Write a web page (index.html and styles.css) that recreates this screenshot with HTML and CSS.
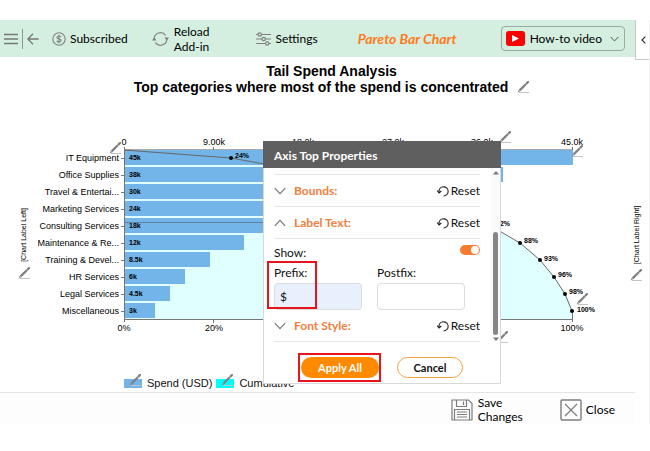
FILE: index.html
```
<!DOCTYPE html>
<html lang="en">
<head>
    <meta charset="UTF-8">
    <meta name="viewport" content="width=device-width, initial-scale=1.0">
    <title>Pareto Bar Chart</title>
    <link rel="stylesheet" href="styles.css">
</head>
<body>
    <svg class="defs" aria-hidden="true">
        <symbol id="pencil" viewBox="0 0 12 12">
            <path d="M2 11.5h10" stroke="#c4c4c4" stroke-width="1"/>
            <path d="M2.6 9.4L8.8 3.2" stroke="#808080" stroke-width="2.2"/>
            <path d="M9.6 2.4L11 1" stroke="#808080" stroke-width="2.2" stroke-linecap="round"/>
            <path d="M0.6 11.4L1.7 8.7L3.3 10.3z" fill="#8a8a8a"/>
        </symbol>
        <symbol id="reset" viewBox="0 0 12 12">
            <path d="M2 7.2V5.6a4.6 4.6 0 1 1 4.6 5.400" fill="none" stroke="#222" stroke-width="1.100"/>
            <path d="M0.2 5.600L2 7.800L4.400 6" fill="none" stroke="#222" stroke-width="1.2"/>
        </symbol>
        <symbol id="chevron" viewBox="0 0 12 8">
            <path d="M0.8 1.2L6 6.6L11.2 1.2" fill="none" stroke="currentColor" stroke-width="1.2"/>
        </symbol>
    </svg>

    <div class="app">
        <div class="pane">
            <header class="topbar">
                <button class="icon-btn menu" aria-label="Menu">
                    <svg width="14" height="12" viewBox="0 0 14 12"><path d="M0 1.5h14M0 6h14M0 10.5h14" stroke="#777" stroke-width="1.5"/></svg>
                </button>
                <button class="icon-btn back" aria-label="Back">
                    <svg width="12" height="12" viewBox="0 0 12 12"><path d="M6 0.8L0.9 6L6 11.2M1 6h10.6" fill="none" stroke="#777" stroke-width="1.3"/></svg>
                </button>
                <button class="nav-item subscribed">
                    <svg width="14" height="14" viewBox="0 0 14 14" fill="none" stroke="#808080"><circle cx="7" cy="7" r="6.2" stroke-width="1.1"/><path d="M9 5.2C8.7 4.2 7.9 4 7 4c-1.200 0-2 .5-2 1.400C5 7.600 9.100 6.300 9.100 8.600 9.100 9.500 8.200 10 7 10S5 9.600 4.800 8.600M7 2.800v8.400" stroke-width="1.1"/></svg>
                    Subscribed
                </button>
                <button class="nav-item reload">
                    <svg width="17" height="16" viewBox="0 0 17 16" fill="none" stroke="#808080" stroke-width="1.2"><path d="M2.200 8A6.300 6.300 0 0 1 13.600 4.300M14.800 8A6.300 6.300 0 0 1 3.400 11.700"/><path d="M12.400 6.500H17L14.800 9.500zM0 9.500H4.600L2.200 6.500z" fill="#808080" stroke="none"/></svg>
                    <span>Reload<br>Add-in</span>
                </button>
                <button class="nav-item settings">
                    <svg width="15" height="14" viewBox="0 0 15 14" fill="none" stroke="#808080" stroke-width="1.2"><path d="M0 2.500h2M5.500 2.500H15M0 7h6M9.500 7H15M0 11.500h9.500M13 11.500h2"/><circle cx="3.700" cy="2.500" r="1.700"/><circle cx="7.700" cy="7" r="1.700"/><circle cx="11.200" cy="11.500" r="1.700"/></svg>
                    Settings
                </button>
                <h1 class="chart-name">Pareto Bar Chart</h1>
                <button class="video-btn">
                    <svg width="19" height="15" viewBox="0 0 19 15"><rect width="19" height="15" rx="3" fill="#f00"/><path d="M6 4L13 7.500L6 11z" fill="#fff"/></svg>
                    <span>How-to video</span>
                    <svg class="caret" width="9" height="6"><use href="#chevron"/></svg>
                </button>
            </header>

            <main class="chart">
                <div class="titles">
                    <div>Tail Spend Analysis</div>
                    <div>Top categories where most of the spend is concentrated<button class="icon-btn edit-title" aria-label="Edit title"><svg width="12" height="12"><use href="#pencil"/></svg></button></div>
                </div>

                <svg class="plot" viewBox="0 94 635 280">
                    <!-- cumulative area -->
                    <path class="area" d="M124 150L231 158L325 175L397 192L451 209L491 226L520 243L540 260L554 277L565 294L572 311V319H124z"/>

                    <g class="bars">
                        <rect x="124" y="150" width="449" height="15"/>
                        <rect x="124" y="167" width="379" height="15"/>
                        <rect x="124" y="184" width="299" height="15"/>
                        <rect x="124" y="201" width="239" height="15"/>
                        <rect x="124" y="218" width="180" height="15"/>
                        <rect x="124" y="235" width="120" height="15"/>
                        <rect x="124" y="252" width="86" height="15"/>
                        <rect x="124" y="269" width="61" height="15"/>
                        <rect x="124" y="286" width="46" height="15"/>
                        <rect x="124" y="303" width="31" height="15"/>
                    </g>

                    <!-- axes, ticks and the 80% line -->
                    <path class="axis-light" d="M124 149.500H573"/>
                    <path class="axis" d="M124.500 147V322M124 319.500H572M213.500 147v3M572.500 147v3M213.500 319v4M572.500 313v9"/>
                    <path class="axis" d="M121 158.500h3M121 175.500h3M121 192.500h3M121 209.500h3M121 226.500h3M121 243.500h3M121 260.500h3M121 277.500h3M121 294.500h3M121 311.500h3"/>
                    <path class="target" d="M124 222.500H484"/>

                    <path class="curve" d="M124 150L231 158L325 175L397 192L451 209L491 226L520 243L540 260L554 277L565 294L572 311"/>
                    <g class="dots">
                        <circle cx="231" cy="158" r="2"/>
                        <circle cx="520" cy="243" r="2"/>
                        <circle cx="540" cy="260" r="2"/>
                        <circle cx="554" cy="277" r="2"/>
                        <circle cx="565" cy="294" r="2"/>
                        <circle cx="572" cy="311" r="2"/>
                    </g>

                    <g class="category">
                        <text x="119" y="161">IT Equipment</text>
                        <text x="119" y="178">Office Supplies</text>
                        <text x="119" y="195">Travel &amp; Entertai...</text>
                        <text x="119" y="212">Marketing Services</text>
                        <text x="119" y="229">Consulting Services</text>
                        <text x="119" y="246">Maintenance &amp; Re...</text>
                        <text x="119" y="263">Training &amp; Devel...</text>
                        <text x="119" y="280">HR Services</text>
                        <text x="119" y="297">Legal Services</text>
                        <text x="119" y="314">Miscellaneous</text>
                    </g>

                    <g class="value">
                        <text x="129" y="160">45k</text>
                        <text x="129" y="177">38k</text>
                        <text x="129" y="194">30k</text>
                        <text x="129" y="211">24k</text>
                        <text x="129" y="228">18k</text>
                        <text x="129" y="245">12k</text>
                        <text x="129" y="262">8.5k</text>
                        <text x="129" y="279">6k</text>
                        <text x="129" y="296">4.5k</text>
                        <text x="129" y="313">3k</text>
                        <text x="235" y="158">24%</text>
                        <text x="496" y="226">82%</text>
                        <text x="524" y="243">88%</text>
                        <text x="544" y="261">93%</text>
                        <text x="558" y="277">96%</text>
                        <text x="569" y="294">98%</text>
                        <text x="577" y="312">100%</text>
                    </g>

                    <g class="scale">
                        <text x="124" y="145">0</text>
                        <text x="214" y="145">9.00k</text>
                        <text x="303" y="145">18.0k</text>
                        <text x="393" y="145">27.0k</text>
                        <text x="482" y="145">36.0k</text>
                        <text x="572" y="145">45.0k</text>
                        <text x="124" y="331">0%</text>
                        <text x="214" y="331">20%</text>
                        <text x="572" y="331">100%</text>
                    </g>

                    <g class="side">
                        <text transform="translate(26 235) rotate(-90)">[Chart Label Left]</text>
                        <text transform="translate(639 235) rotate(-90)">[Chart Label Right]</text>
                    </g>

                    <g class="pencils">
                        <use href="#pencil" x="109" y="142" width="12" height="12"/>
                        <use href="#pencil" x="18" y="267" width="12" height="12"/>
                        <use href="#pencil" x="499" y="131" width="12" height="12"/>
                        <use href="#pencil" x="571" y="145" width="12" height="12"/>
                        <use href="#pencil" x="630" y="269" width="12" height="12"/>
                        <use href="#pencil" x="576" y="293" width="12" height="12"/>
                        <use href="#pencil" x="496" y="331" width="12" height="12"/>
                    </g>
                </svg>

                <div class="legend">
                    <span class="key spend"><svg width="12" height="12"><use href="#pencil"/></svg></span>Spend (USD)
                    <span class="key cumulative"><svg width="12" height="12"><use href="#pencil"/></svg></span>Cumulative
                </div>
            </main>

            <footer class="footer">
                <button class="nav-item save">
                    <svg width="22" height="22" viewBox="0 0 22 22" fill="none" stroke="#7d7d7d" stroke-width="1.200"><path d="M1 1h16.500L21 4.500V21H1z"/><path d="M5.500 1v6.500h10V1M12.500 2.500v3.500M3.500 21V10.500h15V21M6 13h10M6 15.500h10M6 18h10"/></svg>
                    <span>Save<br>Changes</span>
                </button>
                <button class="nav-item close">
                    <svg width="22" height="22" viewBox="0 0 22 22" fill="none" stroke="#7d7d7d"><rect x="1" y="1" width="20" height="20" rx="1" stroke-width="1.400"/><path d="M5 5l12 12M17 5L5 17" stroke-width="1.200"/></svg>
                    Close
                </button>
            </footer>
        </div>

        <aside class="rail">
            <button class="icon-btn collapse" aria-label="Expand panel">
                <svg width="5" height="8" viewBox="0 0 5 8"><path d="M4.400 0.600L1 4L4.400 7.400" fill="none" stroke="#333" stroke-width="1.200"/></svg>
            </button>
        </aside>
    </div>

    <section class="dialog" role="dialog" aria-label="Axis Top Properties">
        <h2>Axis Top Properties</h2>
        <div class="dialog-body">
            <div class="fields">
                <div class="section-row">
                    <svg width="12" height="8"><use href="#chevron"/></svg>
                    <h3>Bounds:</h3>
                    <button class="reset"><svg width="12" height="12"><use href="#reset"/></svg>Reset</button>
                </div>
                <div class="section-row">
                    <svg class="up" width="12" height="8"><use href="#chevron"/></svg>
                    <h3>Label Text:</h3>
                    <button class="reset"><svg width="12" height="12"><use href="#reset"/></svg>Reset</button>
                </div>
                <div class="show-row">
                    <label for="show">Show:</label>
                    <input type="checkbox" id="show" class="toggle" checked>
                </div>
                <div class="text-row">
                    <div class="field">
                        <label for="prefix">Prefix:</label>
                        <input type="text" id="prefix" class="filled" value="$">
                    </div>
                    <div class="field">
                        <label for="postfix">Postfix:</label>
                        <input type="text" id="postfix">
                    </div>
                </div>
                <div class="section-row last">
                    <svg width="12" height="8"><use href="#chevron"/></svg>
                    <h3>Font Style:</h3>
                    <button class="reset"><svg width="12" height="12"><use href="#reset"/></svg>Reset</button>
                </div>
            </div>
            <div class="scrollbar">
                <svg width="8" height="5" viewBox="0 0 8 5"><path d="M1 4.500L4 1L7 4.500z" fill="#777"/></svg>
                <span class="thumb"></span>
                <svg width="8" height="5" viewBox="0 0 8 5"><path d="M1 0.500L4 4L7 0.500z" fill="#777"/></svg>
            </div>
        </div>
        <div class="actions">
            <button class="apply">Apply All</button>
            <button class="cancel">Cancel</button>
        </div>
        <div class="callout callout-prefix"></div>
        <div class="callout callout-apply"></div>
    </section>
</body>
</html>
```
FILE: styles.css
```
* {
    box-sizing: border-box;
}
body {
    margin: 0;
    padding-top: 20px;
    background: #fff;
    color: #111;
    font-family: Lato, "Open Sans", sans-serif;
    font-size: 12px;
}
button {
    padding: 0;
    border: none;
    background: none;
    color: inherit;
    font: inherit;
    cursor: pointer;
}
svg {
    display: block;
    flex: none;
}
.defs {
    position: absolute;
    width: 0;
    height: 0;
}
.app {
    display: flex;
}
.pane {
    flex: 1;
    min-width: 0;
}

/* top bar */
.topbar {
    display: flex;
    align-items: center;
    height: 37px;
    padding: 0 10px 0 4px;
    background: #d4efdf;
}
.menu {
    padding-right: 4px;
}
.back {
    padding: 4px 0 4px 4px;
    border-left: 1px solid #8a9a91;
}
.nav-item {
    display: flex;
    align-items: center;
    gap: 5px;
    color: #000;
    text-align: left;
}
.topbar .nav-item {
    line-height: 15px;
}
.topbar .subscribed {
    gap: 4px;
    margin-left: 13px;
}
.reload {
    margin-left: 24px;
}
.settings {
    margin-left: 46px;
}
.chart-name {
    margin: 0 0 0 40px;
    color: #ff7a22;
    font-size: 14px;
    font-style: italic;
    font-weight: bold;
}
.video-btn {
    display: flex;
    align-items: center;
    height: 25px;
    margin-left: auto;
    padding: 0 5px 0 4px;
    border: 1px solid #9aa9a1;
    border-radius: 4px;
    color: #000;
}
.video-btn span {
    margin: 0 8px 0 5px;
}
.caret {
    color: #444;
}

/* chart */
.chart {
    padding-top: 6px;
}
.titles {
    padding-left: 28px;
    color: #000;
    font-family: "Liberation Sans", Arial, sans-serif;
    font-size: 14px;
    font-weight: bold;
    line-height: 16px;
    text-align: center;
}
.edit-title {
    margin-left: 9px;
    vertical-align: -1px;
}
.plot {
    width: 100%;
    margin-top: -1px;
    overflow: visible;
    font-family: "Liberation Sans", Arial, sans-serif;
}
.area {
    fill: #e0ffff;
}
.bars {
    fill: #73b5e8;
}
.axis, .axis-light, .target, .curve {
    fill: none;
    stroke: #777;
    stroke-width: 1;
}
.axis-light {
    stroke: #aaa;
}
.target {
    stroke: #5f83a0;
}
.curve {
    stroke: #666;
}
.category {
    font-size: 9px;
    text-anchor: end;
}
.scale {
    font-size: 9px;
    text-anchor: middle;
}
.value {
    font-size: 7px;
    font-weight: bold;
}
.side {
    font-size: 7px;
    text-anchor: middle;
}
.legend {
    display: flex;
    align-items: center;
    height: 18px;
    padding-left: 124px;
    font-family: "Liberation Sans", Arial, sans-serif;
    font-size: 11px;
}
.key {
    position: relative;
    width: 18px;
    height: 9px;
    margin-right: 5px;
}
.key svg {
    position: absolute;
    left: 5px;
    bottom: 2px;
}
.spend {
    background: #73b5e8;
}
.cumulative {
    margin-left: 4px;
    background: #0ff;
}

/* footer */
.footer {
    display: flex;
    justify-content: flex-end;
    height: 32px;
    padding: 2px 20px 0 0;
    border-top: 1px solid #e4e4e4;
    background: #fdfdfd;
    line-height: 14px;
}
.footer .close {
    gap: 4px;
    margin-left: 37px;
}

/* right rail */
.rail {
    width: 15px;
    border-right: 1px solid #f2f2f2;
}
.collapse {
    display: flex;
    align-items: center;
    width: 100%;
    height: 40px;
    padding-left: 5px;
    border: solid #c8c8c8;
    border-width: 0 0 1px 1px;
}

/* properties dialog */
.dialog {
    position: absolute;
    top: 141px;
    left: 263px;
    width: 238px;
    border: 1px solid #d8d8d8;
    border-top: none;
    background: #fff;
}
.dialog h2 {
    margin: 0 -1px;
    padding: 3px 11px 0;
    background: #5f5f5f;
    color: #fff;
    font-size: 12px;
    line-height: 24px;
}
.dialog-body {
    display: flex;
    justify-content: space-between;
    padding-left: 10px;
}
.fields {
    width: 206px;
    padding-top: 6px;
}
.section-row {
    display: flex;
    align-items: center;
    height: 32px;
    border-top: 1px solid #e6e6e6;
    color: #777;
}
.section-row h3 {
    margin: 0 auto 0 8px;
    color: #f0803c;
    font-size: 12px;
}
.section-row .up {
    transform: rotate(180deg);
}
.section-row.last {
    border-top: none;
    border-bottom: 1px solid #e6e6e6;
}
.reset {
    display: flex;
    align-items: center;
    gap: 2px;
    color: #111;
}
.show-row {
    display: flex;
    justify-content: space-between;
    align-items: center;
    height: 27px;
    border-top: 1px solid #e6e6e6;
}
.toggle {
    display: flex;
    align-items: center;
    justify-content: flex-end;
    appearance: none;
    width: 20px;
    height: 10px;
    margin: 0 0 4px;
    padding: 1px;
    border-radius: 5px;
    background: #f57c30;
}
.toggle::after {
    content: "";
    width: 8px;
    height: 8px;
    border-radius: 50%;
    background: #fff;
}
.text-row {
    display: flex;
    gap: 15px;
}
.field label {
    display: block;
    height: 18px;
    line-height: 15px;
}
.field input {
    display: block;
    width: 88px;
    height: 27px;
    padding: 0 5px;
    border: 1px solid #dcdcdc;
    border-radius: 4px;
    background: #fff;
    color: #111;
    font: inherit;
}
.field .filled {
    background: #e8f0fe;
}
.scrollbar {
    display: flex;
    flex-direction: column;
    align-items: center;
    width: 9px;
    padding-top: 2px;
    background: #fafafa;
}
.thumb {
    width: 5px;
    height: 103px;
    margin: auto 0 2px;
    border-radius: 3px;
    background: #858585;
}
.actions {
    display: flex;
    gap: 18px;
    padding: 15px 37px 5px;
}
.actions button {
    height: 21px;
    border-radius: 11px;
    font-size: 11px;
    font-weight: bold;
}
.apply {
    width: 78px;
    background: #ff8a00;
    color: #fff;
}
.cancel {
    width: 66px;
}
.actions .cancel {
    border: 1px solid #f5a040;
}
.callout {
    position: absolute;
    border: 2px solid #e8141c;
    pointer-events: none;
}
.callout-prefix {
    top: 120px;
    left: 3px;
    width: 50px;
    height: 48px;
}
.callout-apply {
    top: 212px;
    left: 34px;
    width: 83px;
    height: 29px;
}
```
